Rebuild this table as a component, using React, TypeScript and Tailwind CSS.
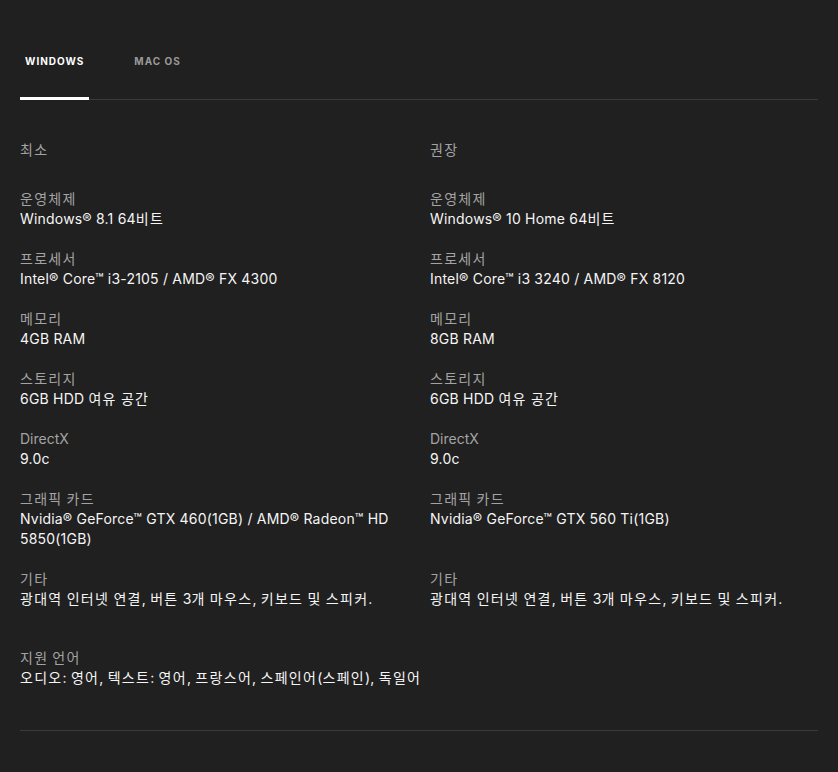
import { useState } from 'react';

interface Spec {
  label: string;
  min: string;
  rec: string;
}

const specs: Spec[] = [
  { label: '운영체제', min: 'Windows® 8.1 64비트', rec: 'Windows® 10 Home 64비트' },
  { label: '프로세서', min: 'Intel® Core™ i3-2105 / AMD® FX 4300', rec: 'Intel® Core™ i3 3240 / AMD® FX 8120' },
  { label: '메모리', min: '4GB RAM', rec: '8GB RAM' },
  { label: '스토리지', min: '6GB HDD 여유 공간', rec: '6GB HDD 여유 공간' },
  { label: 'DirectX', min: '9.0c', rec: '9.0c' },
  {
    label: '그래픽 카드',
    min: 'Nvidia® GeForce™ GTX 460(1GB) / AMD® Radeon™ HD 5850(1GB)',
    rec: 'Nvidia® GeForce™ GTX 560 Ti(1GB)',
  },
  {
    label: '기타',
    min: '광대역 인터넷 연결, 버튼 3개 마우스, 키보드 및 스피커.',
    rec: '광대역 인터넷 연결, 버튼 3개 마우스, 키보드 및 스피커.',
  },
];

// hangul runs get a little extra spacing so they take the width of the original font
function Txt({ children }: { children: string }) {
  const parts = children.split(/([\uAC00-\uD7A3]+)/);
  return (
    <>
      {parts.map((p, i) =>
        /[\uAC00-\uD7A3]/.test(p) ? (
          <span key={i} className="tracking-[1.3px]">
            {p}
          </span>
        ) : (
          p
        )
      )}
    </>
  );
}

function Cell({ label, value }: { label: string; value: string }) {
  return (
    <div>
      <div className="text-sm leading-5 text-[#a3a3a3]">
        <Txt>{label}</Txt>
      </div>
      <div className="text-sm leading-5 tracking-[0.2px] text-[#f5f5f5]">
        <Txt>{value}</Txt>
      </div>
    </div>
  );
}

export default function App() {
  const [tab, setTab] = useState<'win' | 'mac'>('win');

  return (
    <div
      className="min-h-[772px] bg-[#202020] px-5 pt-[22px]"
      style={{ fontFamily: 'Inter, "Noto Sans CJK KR", sans-serif' }}
    >
      <div className="flex gap-[40px] border-b border-[#3a3a3a]">
        {([['win', 'WINDOWS'], ['mac', 'MAC OS']] as const).map(([key, name]) => (
          <button
            key={key}
            onClick={() => setTab(key)}
            className={
              'relative -mb-px h-[78px] px-[5px] text-[10px] font-bold tracking-[0.1em] ' +
              (tab === key ? 'text-white' : 'text-[#9a9a9a]')
            }
          >
            {name}
            {tab === key && <span className="absolute bottom-0 left-0 right-0 h-[3px] bg-white" />}
          </button>
        ))}
      </div>

      <div className="mt-[40px] mb-[29px] grid grid-cols-2 gap-x-[22px] text-sm leading-5 text-[#a3a3a3]">
        <h3>
          <Txt>최소</Txt>
        </h3>
        <h3>
          <Txt>권장</Txt>
        </h3>
      </div>

      <div className="grid grid-cols-2 gap-x-[22px] gap-y-5">
        {specs.map((s) => (
          <div key={s.label} className="contents">
            <Cell label={s.label} value={s.min} />
            <Cell label={s.label} value={s.rec} />
          </div>
        ))}
      </div>

      <div className="mt-[39px] border-b border-[#3a3a3a] pb-[42px]">
        <Cell label="지원 언어" value="오디오: 영어, 텍스트: 영어, 프랑스어, 스페인어(스페인), 독일어" />
      </div>
    </div>
  );
}
